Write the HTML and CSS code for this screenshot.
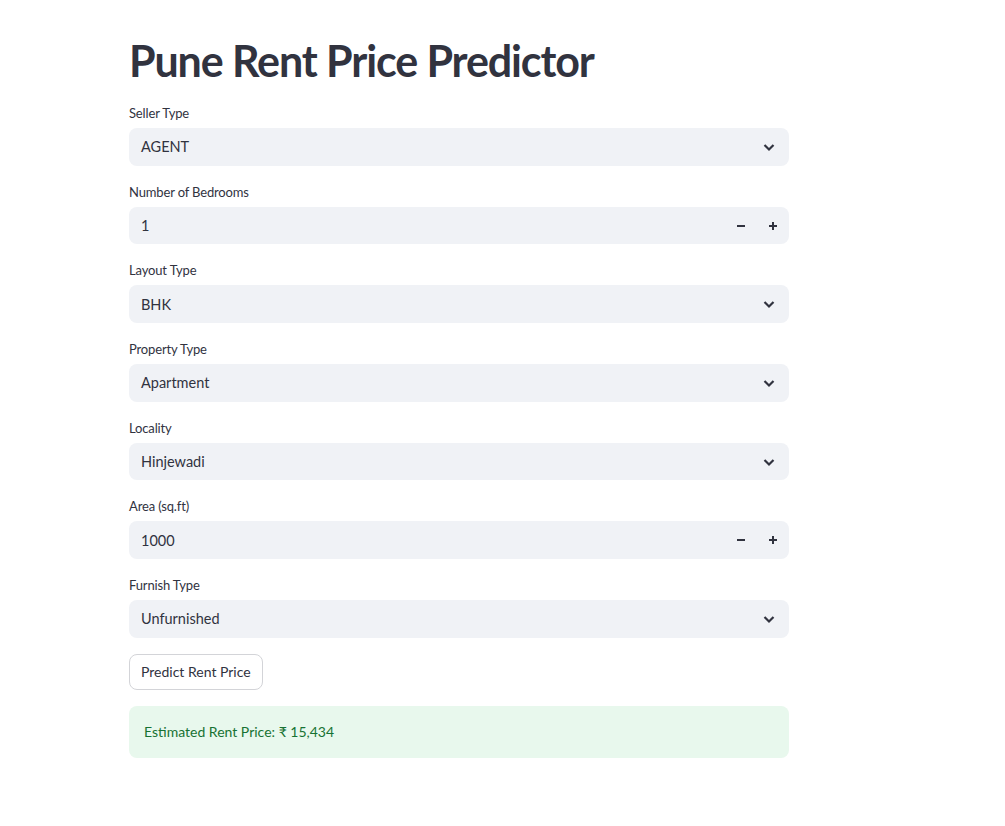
FILE: index.html
```html
<!DOCTYPE html>
<html>
<head>
<meta charset="utf-8">
<link rel="stylesheet" href="styles.css">
</head>
<body>
<main class="app">
  <h1 class="title">Pune Rent Price Predictor</h1>

  <div class="widget">
    <div class="label">Seller Type</div>
    <div class="field">
      <span class="value">AGENT</span>
      <svg class="chev" width="16" height="16" viewBox="0 0 16 16"><path d="M3.5 6l4.5 4.5 4.5-4.5" fill="none" stroke="#31333f" stroke-width="2.2"/></svg>
    </div>
  </div>

  <div class="widget">
    <div class="label">Number of Bedrooms</div>
    <div class="field num">
      <span class="value">1</span>
      <div class="steps">
        <span class="step"><svg width="10" height="10" viewBox="0 0 10 10"><rect x="1" y="4" width="8" height="2" fill="#31333f"/></svg></span>
        <span class="step"><svg width="10" height="10" viewBox="0 0 10 10"><rect x="1" y="4" width="8" height="2" fill="#31333f"/><rect x="4" y="1" width="2" height="8" fill="#31333f"/></svg></span>
      </div>
    </div>
  </div>

  <div class="widget">
    <div class="label">Layout Type</div>
    <div class="field">
      <span class="value">BHK</span>
      <svg class="chev" width="16" height="16" viewBox="0 0 16 16"><path d="M3.5 6l4.5 4.5 4.5-4.5" fill="none" stroke="#31333f" stroke-width="2.2"/></svg>
    </div>
  </div>

  <div class="widget">
    <div class="label">Property Type</div>
    <div class="field">
      <span class="value">Apartment</span>
      <svg class="chev" width="16" height="16" viewBox="0 0 16 16"><path d="M3.5 6l4.5 4.5 4.5-4.5" fill="none" stroke="#31333f" stroke-width="2.2"/></svg>
    </div>
  </div>

  <div class="widget">
    <div class="label">Locality</div>
    <div class="field">
      <span class="value">Hinjewadi</span>
      <svg class="chev" width="16" height="16" viewBox="0 0 16 16"><path d="M3.5 6l4.5 4.5 4.5-4.5" fill="none" stroke="#31333f" stroke-width="2.2"/></svg>
    </div>
  </div>

  <div class="widget">
    <div class="label">Area (sq.ft)</div>
    <div class="field num">
      <span class="value">1000</span>
      <div class="steps">
        <span class="step"><svg width="10" height="10" viewBox="0 0 10 10"><rect x="1" y="4" width="8" height="2" fill="#31333f"/></svg></span>
        <span class="step"><svg width="10" height="10" viewBox="0 0 10 10"><rect x="1" y="4" width="8" height="2" fill="#31333f"/><rect x="4" y="1" width="2" height="8" fill="#31333f"/></svg></span>
      </div>
    </div>
  </div>

  <div class="widget">
    <div class="label">Furnish Type</div>
    <div class="field">
      <span class="value">Unfurnished</span>
      <svg class="chev" width="16" height="16" viewBox="0 0 16 16"><path d="M3.5 6l4.5 4.5 4.5-4.5" fill="none" stroke="#31333f" stroke-width="2.2"/></svg>
    </div>
  </div>

  <div class="btn-row">
    <button class="btn">Predict Rent Price</button>
  </div>

  <div class="success">Estimated Rent Price: ₹ 15,434</div>
</main>
</body>
</html>
```

FILE: styles.css
```css
html, body {
  margin: 0;
  padding: 0;
  background: #ffffff;
}
body {
  font-family: "Lato", "Noto Sans", sans-serif;
  color: #31333f;
}
.app {
  width: 660px;
  margin-left: 129px;
  padding-top: 35px;
  display: flex;
  flex-direction: column;
  gap: 16px;
}
.title {
  margin: 0;
  font-size: 43px;
  font-weight: 700;
  line-height: 52px;
  letter-spacing: -1.1px;
}
.widget {
  display: flex;
  flex-direction: column;
}
.label {
  font-size: 13px;
  line-height: 21px;
  margin-bottom: 4px;
  letter-spacing: -0.15px;
}
.field {
  height: 37.7px;
  background: #f0f2f6;
  border-radius: 8px;
  display: flex;
  align-items: center;
  justify-content: space-between;
  padding: 0 12px;
  font-size: 14.5px;
}
.field.num {
  padding-right: 0;
}
.steps {
  display: flex;
  height: 100%;
}
.step {
  width: 32px;
  height: 100%;
  display: flex;
  align-items: center;
  justify-content: center;
}
.btn-row {
  display: flex;
}
.btn {
  height: 36px;
  padding: 0 11px;
  background: #ffffff;
  border: 1px solid #d3d4d8;
  border-radius: 8px;
  font-family: inherit;
  font-size: 14px;
  color: #31333f;
}
.success {
  height: 52px;
  box-sizing: border-box;
  background: #e8f8ed;
  border-radius: 8px;
  color: #177233;
  font-size: 14px;
  display: flex;
  align-items: center;
  padding: 0 15px;
}
```
